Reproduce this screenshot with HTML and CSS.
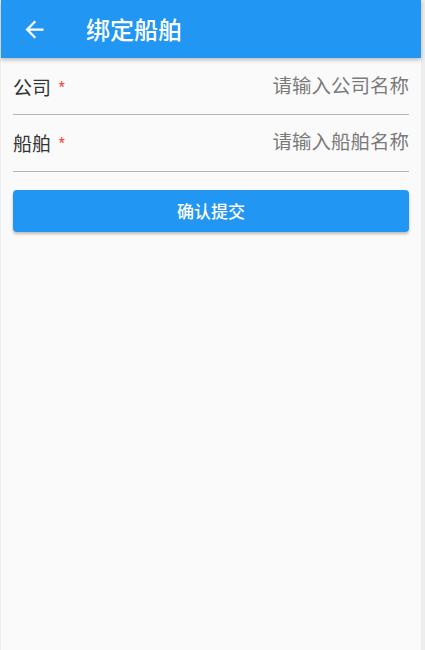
FILE: index.html
```html
<!DOCTYPE html>
<html>
<head>
    <meta charset="utf-8">
    <title>绑定船舶</title>
    <link rel="stylesheet" href="styles.css">
</head>
<body>
    <div class="screen">
        <header class="app-bar">
            <span class="back">
                <svg viewBox="0 0 24 24" width="27" height="27"><path fill="#fff" d="M20 11H7.83l5.59-5.59L12 4l-8 8 8 8 1.41-1.41L7.83 13H20v-2z"/></svg>
            </span>
            <h1>绑定船舶</h1>
        </header>
        <form class="form">
            <div class="field">
                <label for="company">公司 <span class="req">*</span></label>
                <input id="company" placeholder="请输入公司名称">
            </div>
            <div class="field">
                <label for="ship">船舶 <span class="req">*</span></label>
                <input id="ship" placeholder="请输入船舶名称">
            </div>
            <button class="submit-btn" type="button">确认提交</button>
        </form>
    </div>
</body>
</html>
```

FILE: styles.css
```css
* {
    box-sizing: border-box;
}
body {
    margin: 0;
    background-color: #ededed;
    font-family: Roboto, "Noto Sans CJK SC", sans-serif;
}
.screen {
    width: 420px;
    height: 650px;
    margin-left: 1px;
    background-color: #fafafa;
}
.app-bar {
    height: 58px;
    background-color: #2196f3;
    display: flex;
    align-items: center;
    box-shadow: 0 2px 4px rgba(0, 0, 0, 0.25);
    position: relative;
}
.back {
    width: 64px;
    display: flex;
    justify-content: center;
    margin-left: 1px;
}
.back svg {
    display: block;
}
.app-bar h1 {
    margin: 0 0 2px 20px;
    color: white;
    font-size: 24px;
    font-weight: 500;
}
.form {
    padding: 0.5px 12px 0;
}
.field {
    display: flex;
    align-items: center;
    height: 56.5px;
    border-bottom: 1.5px solid #b5b5b5;
}
.field label {
    color: #333;
    font-size: 19px;
    white-space: nowrap;
}
.req {
    color: #f44336;
    font-size: 14px;
    margin-left: 3px;
    vertical-align: 3px;
}
.field input {
    flex: 1;
    border: none;
    background: transparent;
    text-align: right;
    font-size: 19.5px;
    font-family: inherit;
    padding: 0;
    outline: none;
    min-width: 0;
}
.field input::placeholder {
    color: #7a7a7a;
}
.submit-btn {
    display: block;
    width: 100%;
    height: 42px;
    margin-top: 18px;
    border: none;
    border-radius: 4px;
    background-color: #2196f3;
    color: white;
    font-size: 17px;
    font-family: inherit;
    font-weight: 500;
    box-shadow: 0 2px 3px rgba(0, 0, 0, 0.25);
}
```
